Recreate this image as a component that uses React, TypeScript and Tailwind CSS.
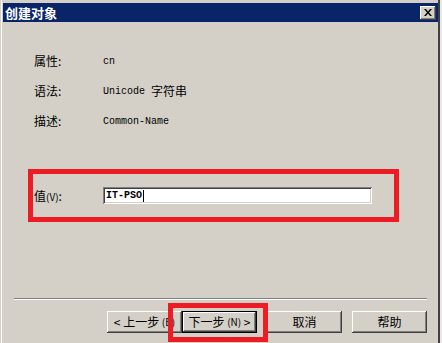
import React from 'react';

const CJK = "font-['Noto_Sans_CJK_SC',sans-serif]";
const MONO = "font-['Liberation_Mono','Noto_Sans_CJK_SC',monospace]";

const ROWS = [
  { label: '属性:', value: 'cn' },
  { label: '语法:', value: 'Unicode ', cjk: '字符串' },
  { label: '描述:', value: 'Common-Name' },
];

function Btn({ children, def }: { children: React.ReactNode; def?: boolean }) {
  return (
    <div
      className={
        'w-[75px] h-[22px] flex items-center justify-center text-[12px] leading-none text-black bg-[#d4d0c8] whitespace-pre ' +
        CJK +
        (def
          ? ' border border-black shadow-[inset_-1px_-1px_#404040,inset_1px_1px_#ffffff,inset_-2px_-2px_#808080]'
          : ' shadow-[inset_-1px_-1px_#404040,inset_1px_1px_#ffffff,inset_-2px_-2px_#808080]')
      }
    >
      {children}
    </div>
  );
}

export default function App() {
  return (
    <div className="w-[442px] h-[343px] bg-[#d4d0c8] flex overflow-hidden relative">
      <div className="ml-[1px] w-[438px] h-full border-l border-white border-r border-r-[#404040] pl-[1px] pt-[3px] flex flex-col">
        {/* title bar */}
        <div className="h-[19px] w-[435px] bg-[#0a246a] flex items-center justify-between pl-[2px] pr-[2px]">
          <span className={'text-white font-bold text-[13px] leading-none ' + CJK}>创建对象</span>
          <div className="w-[16px] h-[14px] bg-[#d4d0c8] flex items-center justify-center shadow-[inset_-1px_-1px_#404040,inset_1px_1px_#ffffff,inset_-2px_-2px_#808080]">
            <svg width="8" height="7" viewBox="0 0 8 7">
              <path d="M0 0h2l2 2.5L6 0h2L5 3.5 8 7H6L4 4.5 2 7H0l3-3.5z" fill="#000" />
            </svg>
          </div>
        </div>

        {/* attribute rows */}
        <div className="mt-[31px] flex flex-col gap-[14px]">
          {ROWS.map((r) => (
            <div key={r.label} className="h-[16px] flex items-center">
              <span className={'ml-[31px] w-[69px] text-[12px] text-black ' + CJK}>{r.label}</span>
              <span className={'text-[10px] text-black whitespace-pre ' + MONO}>{r.value}</span>
              {r.cjk && <span className={'text-[12px] text-black ' + CJK}>{r.cjk}</span>}
            </div>
          ))}
        </div>

        {/* value box */}
        <div className="mt-[40px] ml-[25px] w-[371px] h-[53px] border-[5px] border-[#ed1c24] flex items-center">
          <span className={'ml-[1px] w-[69px] text-[12px] text-black ' + CJK}>
            值<span className="text-[10px]">(V)</span>:
          </span>
          <div className="w-[269px] h-[17px] bg-white flex items-center pl-[3px] shadow-[inset_1px_1px_#808080,inset_-1px_-1px_#ffffff,inset_2px_2px_#404040,inset_-2px_-2px_#d4d0c8]">
            <span className={'text-[10px] font-bold text-black leading-none ' + MONO}>IT-PSO</span>
            <span className="w-[1px] h-[12px] bg-black ml-[1px]" />
          </div>
        </div>

        {/* separator */}
        <div className="mt-[76px] ml-[11px] w-[413px] h-[2px] border-t border-[#808080] border-b border-b-white" />

        {/* buttons */}
        <div className="mt-[11px] ml-[104px] flex">
          <Btn>
            &lt; 上一步 <span className="text-[10px]">(B)</span>
          </Btn>
          <Btn def>
            下一步 <span className="text-[10px]">(N)</span> &gt;
          </Btn>
          <div className="ml-[10px]">
            <Btn>取消</Btn>
          </div>
          <div className="ml-[10px]">
            <Btn>帮助</Btn>
          </div>
        </div>
      </div>
      <div className="w-[3px] h-full border-l border-[#404040] bg-[#e8e8e8]" />

      {/* annotation around next button */}
      <div className="absolute left-[168px] top-[303px] w-[100px] h-[39px] border-[5px] border-[#ed1c24]" />
    </div>
  );
}
